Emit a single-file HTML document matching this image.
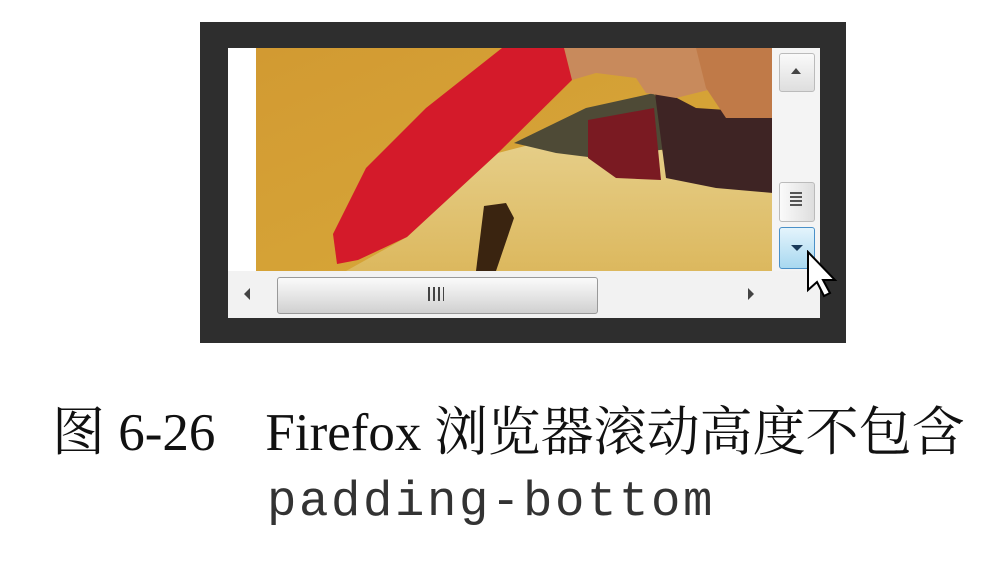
<!DOCTYPE html>
<html><head><meta charset="utf-8"><style>
body{margin:0;width:986px;height:564px;background:#fff;position:relative;overflow:hidden}
.a{position:absolute}
</style></head><body>
<div class="a" style="left:200px;top:22px;width:646px;height:321px;background:#2e2e2e"></div>
<div class="a" style="left:228px;top:48px;width:592px;height:270px;background:#fff"></div>
<svg class="a" style="left:256px;top:48px" width="517" height="223" viewBox="0 0 517 223">
<defs><linearGradient id="bg" x1="0" y1="0" x2="1" y2="1"><stop offset="0" stop-color="#d29a32"/><stop offset="1" stop-color="#d8aa3a"/></linearGradient>
<linearGradient id="fur" x1="0" y1="0" x2="0" y2="1"><stop offset="0" stop-color="#e6cf8a"/><stop offset="1" stop-color="#dcb85e"/></linearGradient></defs>
<rect width="517" height="223" fill="url(#bg)"/>
<path d="M242 105 L300 90 L400 100 L517 145 L517 223 L90 223 L151 189 Z" fill="url(#fur)"/>
<path d="M258 95 L330 60 L398 45 L420 100 L340 110 L300 105 Z" fill="#4e4a36"/>
<path d="M332 72 L398 60 L405 132 L360 130 L332 110 Z" fill="#7a1a22"/>
<path d="M398 38 L440 60 L517 65 L517 145 L460 140 L410 130 Z" fill="#3e2424"/>
<path d="M308 0 L440 0 L460 40 L420 50 L390 45 L380 30 L340 25 L316 32 Z" fill="#c88a5c"/>
<path d="M440 0 L517 0 L517 70 L470 70 L450 40 Z" fill="#c07a48"/>
<path d="M246 0 L308 0 L316 32 L242 105 L151 189 L102 212 L81 216 L77 186 L110 120 L170 60 Z" fill="#d41a2a"/>
<path d="M228 158 L250 155 L258 170 L240 223 L220 223 Z" fill="#3a2410"/>
</svg>
<div class="a" style="left:772px;top:48px;width:48px;height:223px;background:#f4f4f4"></div>
<div class="a" style="left:779px;top:53px;width:36px;height:39px;border:1px solid #bbb;border-radius:3px;background:linear-gradient(#fafafa,#dedede);box-sizing:border-box"></div>
<div class="a" style="left:791px;top:68px;width:0;height:0;border-left:5px solid transparent;border-right:5px solid transparent;border-bottom:6px solid #444"></div>
<div class="a" style="left:779px;top:182px;width:36px;height:40px;border:1px solid #bbb;border-radius:3px;background:linear-gradient(90deg,#fafafa,#dedede);box-sizing:border-box"></div>
<div class="a" style="left:790px;top:192px;width:12px;height:16px;background:repeating-linear-gradient(#555 0 2px,transparent 2px 4px)"></div>
<div class="a" style="left:779px;top:227px;width:36px;height:42px;border:1px solid #4a90c8;border-radius:3px;background:linear-gradient(#e4f4fc,#a8d8f0);box-sizing:border-box"></div>
<div class="a" style="left:791px;top:245px;width:0;height:0;border-left:6px solid transparent;border-right:6px solid transparent;border-top:6px solid #1a3a5a"></div>
<div class="a" style="left:228px;top:271px;width:592px;height:47px;background:#f2f2f2"></div>
<div class="a" style="left:244px;top:288px;width:0;height:0;border-top:6px solid transparent;border-bottom:6px solid transparent;border-right:6px solid #444"></div>
<div class="a" style="left:748px;top:288px;width:0;height:0;border-top:6px solid transparent;border-bottom:6px solid transparent;border-left:6px solid #444"></div>
<div class="a" style="left:277px;top:277px;width:321px;height:37px;border:1px solid #999;border-radius:3px;background:linear-gradient(#fafafa,#e6e6e6 50%,#d0d0d0);box-sizing:border-box"></div>
<div class="a" style="left:428px;top:287px;width:16px;height:14px;background:repeating-linear-gradient(90deg,#444 0 2px,transparent 2px 5px)"></div>
<svg class="a" style="left:806px;top:250px" width="36" height="50" viewBox="0 0 36 50"><path d="M2 2 L2 40 L11 32 L18 46 L24 43 L17 30 L29 30 Z" fill="#fff" stroke="#000" stroke-width="2"/></svg>
<div class="a" style="left:52px;top:403px;font:53px/60px 'Liberation Serif','Noto Serif CJK SC',serif;color:#111;white-space:nowrap">图 6-26<span style="display:inline-block;width:50px"></span>Firefox 浏览器滚动高度不包含</div>
<div class="a" style="left:267px;top:472px;font:49px/60px 'Liberation Mono',monospace;color:#333;white-space:nowrap;letter-spacing:2.6px">padding-bottom</div>
</body></html>
